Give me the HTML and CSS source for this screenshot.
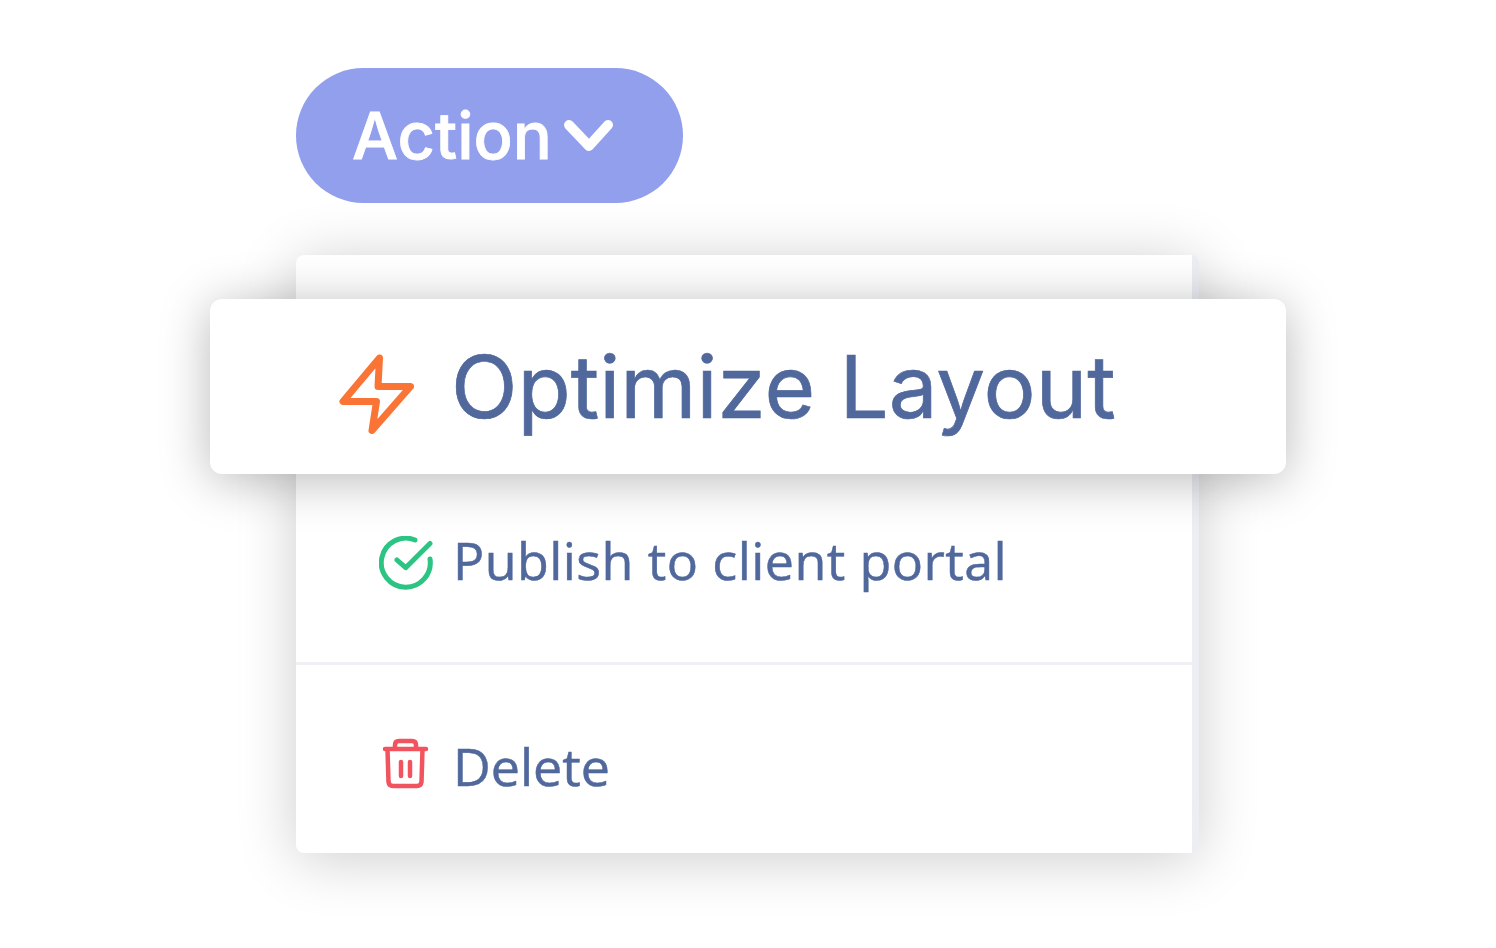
FILE: index.html
```html
<!DOCTYPE html>
<html lang="en-us">

<head>
<meta charset="utf-8">
<title>Action menu</title>
<link rel="stylesheet" href="styles.css">
</head>

<body>
    <button class="actionButton">
        <span>Action</span>
        <svg class="chevron" width="50" height="32" viewBox="0 0 50 32"><path d="M5 5 L25 26 L44 5"/></svg>
    </button>

    <div class="menu">
        <div class="menuBody">
            <div class="menuItem publishItem">
                <svg class="itemIcon" width="54" height="54" viewBox="0 0 54 54">
                    <path class="checkRing" d="M51 23 A24.5 24.5 0 1 1 36 4"/>
                    <path class="checkRing" d="M18 24 L26.7 31.7 L51 7.5"/>
                </svg>
                <span>Publish to client portal</span>
            </div>
            <div class="menuItem deleteItem">
                <svg class="itemIcon" width="54" height="54" viewBox="0 0 54 54">
                    <path class="trash" d="M6 12 H47 M8.5 12 L9.5 45 Q10 49 14 49 H38 Q42 49 42.5 45 L43.5 12 M16 11 V8 Q16 4 20 4 H33 Q37 4 37 8 V11 M22 25 V39 M31 25 V39"/>
                </svg>
                <span>Delete</span>
            </div>
        </div>
        <div class="scrollTrack"></div>

        <!-- enlarged item, floats over the menu -->
        <div class="highlightCard">
            <svg class="boltIcon" width="80" height="100" viewBox="0 0 80 100">
                <path d="M43.5 21 L7 64.5 H40.5 L36 93.5 L74.5 49.5 H42 Z"/>
            </svg>
            <span class="highlightText">Optimize Layout</span>
        </div>
    </div>
</body>
</html>
```

FILE: styles.css
```css
body {
	box-sizing: border-box;
	height: 948px;
	margin: 0;
	padding: 68px 0 0 296px;
	background-color: #FFFFFF;
}

.actionButton {
	display: flex;
	align-items: center;
	gap: 12px;
	width: 387px;
	height: 135px;
	padding: 0 0 0 56px;
	border: none;
	border-radius: 68px;
	background-color: #919FEC;
	color: #FFFFFF;
	font-family: Inter, sans-serif;
	font-size: 65px;
	font-weight: 500;
	-webkit-text-stroke: 0.8px #FFFFFF;
}

.chevron {
	fill: none;
	stroke: #FFFFFF;
	stroke-width: 10;
	stroke-linecap: round;
	stroke-linejoin: round;
}

.menu {
	position: relative;
	display: flex;
	width: 903px;
	height: 598px;
	margin-top: 52px;
	border-radius: 8px;
	background-color: #FFFFFF;
	box-shadow: 0 6px 60px rgba(0, 0, 0, 0.2);
}

.menuBody {
	flex: 1;
	padding-top: 262px;
}

.scrollTrack {
	width: 7px;
	border-radius: 0 8px 8px 0;
	background-color: #EDEEF4;
}

.menuItem {
	display: flex;
	align-items: center;
	gap: 20px;
	padding-left: 83px;
	color: #50689C;
	font-family: "Open Sans", sans-serif;
	font-size: 52px;
	font-weight: 500;
	-webkit-text-stroke: 0.5px #50689C;
}

.menuItem span {
	margin-bottom: 4px;
	filter: blur(0.6px);
}

.publishItem {
	height: 88px;
	padding-bottom: 57px;
	border-bottom: 3px solid #EEF0F4;
}

.publishItem span {
	letter-spacing: 0.42px;
}

.publishItem .itemIcon {
	margin-top: 4px;
}

.deleteItem {
	height: 205px;
}

.deleteItem .itemIcon {
	margin-bottom: 8px;
}

.itemIcon {
	flex-shrink: 0;
	fill: none;
	stroke-linecap: round;
	stroke-linejoin: round;
	filter: blur(0.5px);
}

.checkRing {
	stroke: #2BC483;
	stroke-width: 5;
}

.trash {
	stroke: #F2545F;
	stroke-width: 4.5;
}

.highlightCard {
	position: absolute;
	left: -86px;
	top: 44px;
	display: flex;
	align-items: center;
	gap: 35px;
	box-sizing: border-box;
	width: 1076px;
	height: 175px;
	padding-left: 126px;
	border-radius: 12px;
	background-color: #FFFFFF;
	box-shadow: 0 6px 50px rgba(0, 0, 0, 0.28);
	color: #50689C;
	font-family: Inter, sans-serif;
	font-size: 87px;
	-webkit-text-stroke: 0.7px #50689C;
}

.highlightText {
	filter: blur(0.4px);
}

.boltIcon {
	fill: none;
	stroke: #FA7436;
	stroke-width: 7;
	stroke-linecap: round;
	stroke-linejoin: round;
	filter: blur(0.4px);
}
```
